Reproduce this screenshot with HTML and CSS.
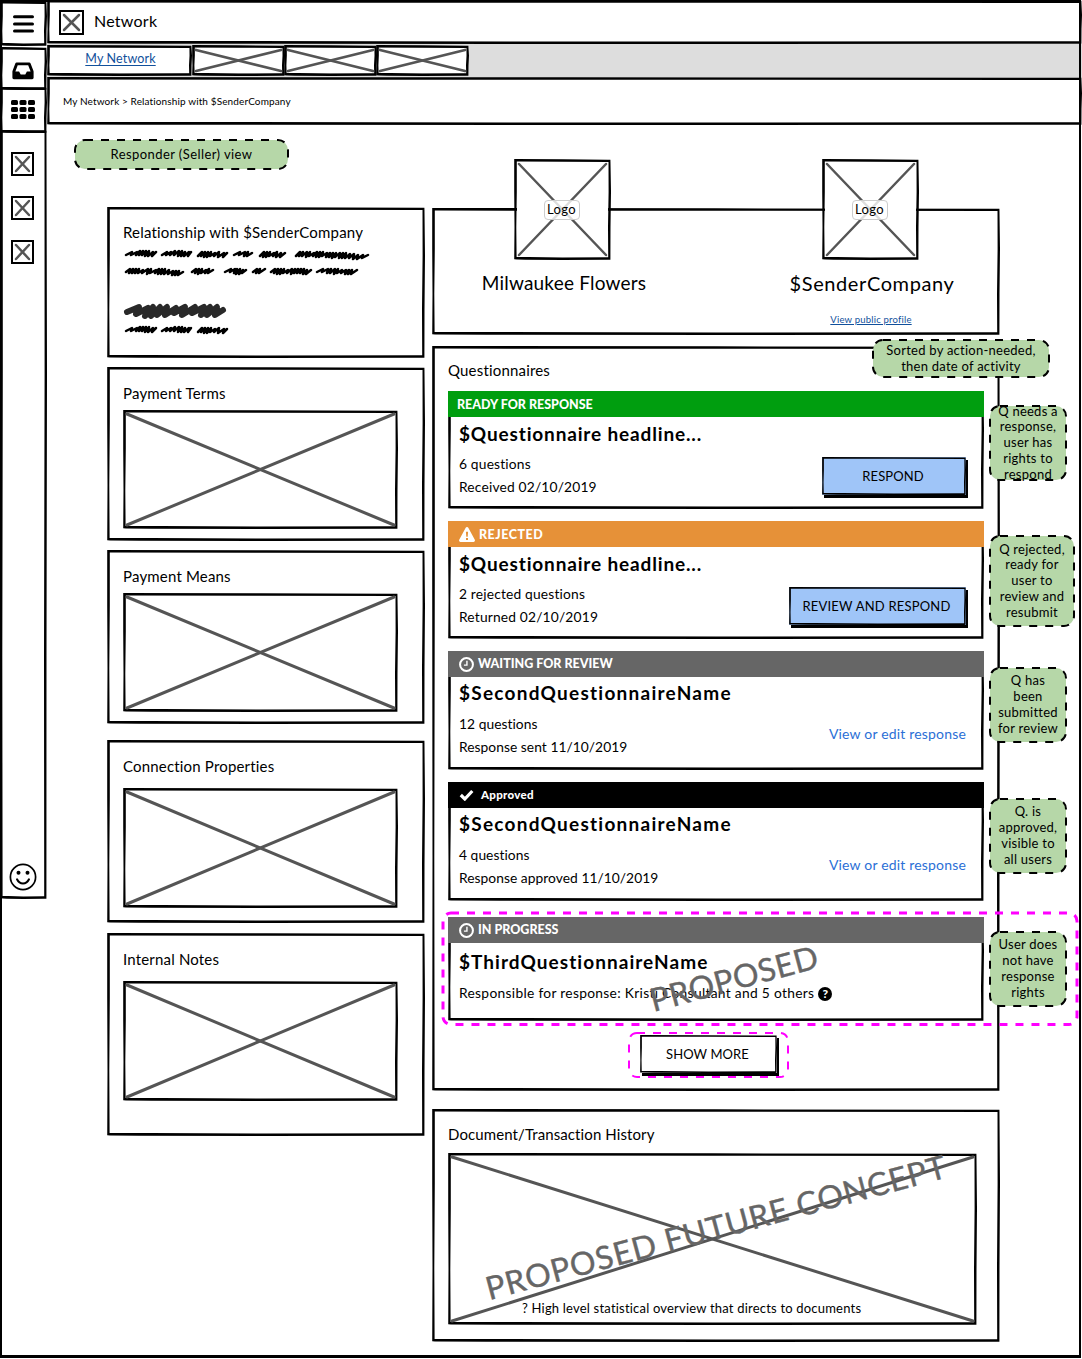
FILE: index.html
```html
<!DOCTYPE html>
<html lang="en">
<head>
<meta charset="utf-8">
<title>Network</title>
<link rel="stylesheet" href="styles.css">
</head>
<body>
<svg width="0" height="0" class="defs">
  <symbol id="cross" overflow="visible"><line x1="0" y1="0" x2="100%" y2="100%"/><line x1="100%" y1="0" x2="0" y2="100%"/></symbol>
  <symbol id="clock" viewBox="0 0 14 14"><circle cx="7" cy="7" r="6" fill="none" stroke="#fff" stroke-width="1.9"/><path d="M7.4 3.4V7.6H4.6" fill="none" stroke="#fff" stroke-width="1.3"/></symbol>
</svg>
<div class="page">
  <nav class="sidebar">
    <div class="cell sketch cell-menu"><svg width="21" height="18"><path d="M1.5 1.8h18M1.5 9h18M1.5 16h18" stroke="#000" stroke-width="3" stroke-linecap="round"/></svg></div>
    <div class="cell sketch cell-inbox"><svg width="22" height="18"><path fill-rule="evenodd" d="M4.6.4h12.6q1 0 1.4 1l2.8 7.4q.2.5.2 1v6q0 1.4-1.4 1.4H1.8q-1.4 0-1.4-1.4v-6q0-.5.2-1L3.300 1.400Q3.700.4 4.600.4zM5.700 3.200L3.400 9.500h3.700l1.600 3h4.600l1.600-3h3.700L16.200 3.200z"/></svg></div>
    <div class="cell sketch cell-apps"><svg width="24" height="19"><g><rect width="7" height="5" rx="1.500"/><rect x="8.500" width="7" height="5" rx="1.500"/><rect x="17" width="7" height="5" rx="1.500"/><rect y="7" width="7" height="5" rx="1.500"/><rect x="8.500" y="7" width="7" height="5" rx="1.500"/><rect x="17" y="7" width="7" height="5" rx="1.500"/><rect y="14" width="7" height="5" rx="1.500"/><rect x="8.500" y="14" width="7" height="5" rx="1.500"/><rect x="17" y="14" width="7" height="5" rx="1.500"/></g></svg></div>
    <div class="cell sketch cell-links">
      <span class="mini"><svg><use href="#cross"/></svg></span>
      <span class="mini"><svg><use href="#cross"/></svg></span>
      <span class="mini"><svg><use href="#cross"/></svg></span>
      <svg class="smiley" width="28" height="28"><circle cx="14" cy="14" r="12.600" fill="none" stroke="#000" stroke-width="1.700"/><circle cx="9.500" cy="9.800" r="2"/><circle cx="18.500" cy="9.800" r="2"/><path d="M8 16.300q2 4.200 6 4.200t6-4.200" fill="none" stroke="#000" stroke-width="2" stroke-linecap="round"/></svg>
    </div>
  </nav>

  <div class="main">
    <header class="topbar sketch"><span class="mini mini-lg"><svg><use href="#cross"/></svg></span><h1>Network</h1></header>
    <div class="tabs">
      <div class="tab tab-active sketch"><a>My Network</a></div>
      <div class="tab sketch"><svg><use href="#cross"/></svg></div>
      <div class="tab sketch"><svg><use href="#cross"/></svg></div>
      <div class="tab sketch"><svg><use href="#cross"/></svg></div>
    </div>
    <div class="crumbs sketch">My Network &gt; Relationship with $SenderCompany</div>

    <div class="content">
      <div class="left">
        <section class="card sketch about">
          <h2>Relationship with $SenderCompany</h2>
          <svg class="scribble" width="260" height="92" fill="none" stroke="#000" stroke-width="2.500" stroke-linecap="round" stroke-linejoin="round">
            <path d="M3 11l6-3-1 3 6-3-1 3 4-4-1 4 4-4-1 4 4-4-1 5 4-5-1 5 5-4-1 4 4-4M39 11l5-3-1 3 5-3-1 3 5-4-1 4 5-4-1 5 4-5-1 5 4-4-1 4 5-4-1 4 3-4M75 12l4-4-1 4 4-4-1 5 4-5-1 5 4-5-1 4 5-3-1 3 5-4-1 5 6-4-1 4 4-4M111 11l6-3-1 3 6-3-1 4 4-4-1 4 5-3M137 12l4-4-1 5 4-5-1 5 4-5-1 4 5-3-1 3 4-4-1 5 5-4-1 4 5-4M173 12l4-4-1 4 4-4-1 4 5-4-1 5 4-5-1 4 5-3-1 3 4-4-1 5 4-5-1 5 4-5-1 4 5-3-1 4 4-4-1 4 4-4-1 5 4-5-1 4 5-4-1 5 4-5-1 5 4-5-1 5 5-4-1 4 5-4-1 5 5-4-1 4 6-4-1 3 6-3"/>
            <path d="M3 28l4-3-1 4 4-4-1 4 4-4-1 4 4-4-1 4 5-3-1 3 6-4-1 5 4-5-1 4 6-3-1 3 4-4-1 5 4-5-1 5 4-5-1 5 5-4-1 4 5-3-1 4 4-4-1 4 4-4-1 4 5-3M69 28l4-3-1 4 4-4-1 5 4-5-1 4 5-3-1 3 4-4-1 4 5-3M102 28l6-3-1 3 5-3-1 4 3-4-1 5 4-5-1 5 4-4-1 3 4-3M130 28l4-3-1 4 4-4-1 4 6-4M148 28l4-3-1 4 4-4-1 5 4-5-1 5 4-5-1 4 5-3-1 3 5-4-1 5 4-5-1 4 4-4-1 4 4-4-1 4 4-4-1 5 4-4-1 4 5-4M194 28l6-3-1 3 6-3-1 4 4-4-1 4 5-4-1 5 4-5-1 4 5-3-1 3 5-3-1 4 4-4-1 4 4-4-1 4 6-4"/>
            <path stroke="#292929" stroke-width="6" d="M4 68l12-5-3 7 12-6-3 8 8-9-2 9 9-9-3 8 10-8-2 8 11-7-2 5 11-6-3 8 13-8-3 6 12-6-3 8 9-8-3 8 10-8-2 8 8-5"/>
            <path d="M3 87l6-3-1 3 6-3-1 3 4-4-1 4 4-4-1 4 4-4-1 5 4-5-1 5 5-4-1 4 4-4M39 87l5-3-1 3 5-3-1 3 5-4-1 4 5-4-1 5 4-5-1 5 4-4-1 4 5-4-1 4 3-4M75 88l4-4-1 4 4-4-1 5 4-5-1 5 4-5-1 4 5-3-1 3 5-4-1 5 6-4-1 4 4-4"/>
          </svg>
        </section>
        <section class="card sketch terms"><h2>Payment Terms</h2><div class="ph sketch"><svg><use href="#cross"/></svg></div></section>
        <section class="card sketch means"><h2>Payment Means</h2><div class="ph sketch"><svg><use href="#cross"/></svg></div></section>
        <section class="card sketch props"><h2>Connection Properties</h2><div class="ph sketch"><svg><use href="#cross"/></svg></div></section>
        <section class="card sketch notes"><h2>Internal Notes</h2><div class="ph sketch"><svg><use href="#cross"/></svg></div></section>
      </div>

      <div class="right">
        <section class="card sketch parties">
          <div class="party">
            <div class="logo sketch"><svg><use href="#cross"/></svg><span>Logo</span></div>
            <strong class="responder">Milwaukee Flowers</strong>
          </div>
          <div class="party">
            <div class="logo sketch"><svg><use href="#cross"/></svg><span>Logo</span></div>
            <strong>$SenderCompany</strong>
            <a>View public profile</a>
          </div>
        </section>

        <section class="card sketch questionnaires">
          <h2>Questionnaires</h2>
          <article class="item sketch i1">
            <div class="banner green">READY FOR RESPONSE</div>
            <div class="body">
              <div class="info"><h3>$Questionnaire headline...</h3><p>6 questions</p><p>Received 02/10/2019</p></div>
              <button class="btn sketch">RESPOND</button>
            </div>
          </article>
          <article class="item sketch i2">
            <div class="banner orange"><svg width="16" height="15"><path fill="#fff" fill-rule="evenodd" d="M8 0q.9 0 1.300.8l6.500 12q.3.700 0 1.300-.4.900-1.300.9H1.500q-.9 0-1.300-.9-.3-.6 0-1.300l6.500-12Q7.100 0 8 0zM6.900 4.800l.4 5h1.400l.4-5zM7 11v2h2v-2z"/></svg><span>REJECTED</span></div>
            <div class="body">
              <div class="info"><h3>$Questionnaire headline...</h3><p>2 rejected questions</p><p>Returned 02/10/2019</p></div>
              <button class="btn sketch btn-wide">REVIEW AND RESPOND</button>
            </div>
          </article>
          <article class="item sketch i3">
            <div class="banner gray"><svg width="15" height="15"><use href="#clock"/></svg><span>WAITING FOR REVIEW</span></div>
            <div class="body">
              <div class="info"><h3>$SecondQuestionnaireName</h3><p>12 questions</p><p>Response sent 11/10/2019</p></div>
              <a class="edit">View or edit response</a>
            </div>
          </article>
          <article class="item sketch i4">
            <div class="banner black"><svg width="15" height="12"><path d="M1.800 6l4 4 7.500-8" fill="none" stroke="#fff" stroke-width="3.200"/></svg><span>Approved</span></div>
            <div class="body">
              <div class="info"><h3>$SecondQuestionnaireName</h3><p>4 questions</p><p>Response approved 11/10/2019</p></div>
              <a class="edit">View or edit response</a>
            </div>
          </article>
          <article class="item sketch i5">
            <div class="banner gray"><svg width="15" height="15"><use href="#clock"/></svg><span>IN PROGRESS</span></div>
            <div class="body">
              <div class="info"><h3>$ThirdQuestionnaireName</h3><p>Responsible for response: Kristi Consultant and 5 others <span class="help">?</span></p></div>
            </div>
          </article>
          <button class="btn sketch more">SHOW MORE</button>
        </section>

        <section class="card sketch history">
          <h2>Document/Transaction History</h2>
          <div class="ph sketch"><svg><use href="#cross"/></svg><p>? High level statistical overview that directs to documents</p></div>
        </section>
      </div>
    </div>
  </div>

  <div class="note n0"><svg><rect rx="10"/></svg><span>Responder (Seller) view</span></div>
  <div class="note n1"><svg><rect rx="10"/></svg><span>Sorted by action-needed,<br>then date of activity</span></div>
  <div class="note n2"><svg><rect rx="10"/></svg><span>Q needs a<br>response,<br>user has<br>rights to<br>respond</span></div>
  <div class="note n3"><svg><rect rx="10"/></svg><span>Q rejected,<br>ready for<br>user to<br>review and<br>resubmit</span></div>
  <div class="note n4"><svg><rect rx="10"/></svg><span>Q has<br>been<br>submitted<br>for review</span></div>
  <div class="note n5"><svg><rect rx="10"/></svg><span>Q. is<br>approved,<br>visible to<br>all users</span></div>
  <svg class="outline o1"><rect rx="8"/></svg>
  <svg class="outline o2"><rect rx="8"/></svg>
  <div class="note n6"><svg><rect rx="10"/></svg><span>User does<br>not have<br>response<br>rights</span></div>
  <div class="stamp s1">PROPOSED</div>
  <div class="stamp s2">PROPOSED FUTURE CONCEPT</div>
</div>
</body>
</html>
```
FILE: styles.css
```css
* { box-sizing: border-box; }
body { margin: 0; background: #fff; color: #000; font: 14px/20px Lato, "Open Sans", sans-serif; }
h1, h2, h3, p { margin: 0; font-weight: 400; }
.defs { position: absolute; }

/* hand-drawn frame: edges vary slightly in thickness as they stretch */
.sketch {
  border: 3px solid #000;
  border-image: url("data:image/svg+xml,%3Csvg xmlns='http://www.w3.org/2000/svg' width='60' height='60'%3E%3Cpath fill-rule='evenodd' d='M.2 0L30 .3 59.400 .8 60 20 59.500 40 59.400 59.800 30 60 8 59.800 .2 59.200 .5 40 .2 20zM2.800 2.600L30 2.700 57.500 3 57.600 20 57 40 57.200 57.300 30 57.600 10 57 2.600 57.100 2.300 40 2.800 20z'/%3E%3C/svg%3E") 3 stretch;
  background: #fff;
  background-clip: padding-box;
}
.page { position: relative; display: flex; width: 1082px; height: 1359px; overflow: hidden; }
.page::after { content: ""; position: absolute; inset: 0 1px 1px 0; border: solid #000; border-width: 2px 2px 3px 2px; pointer-events: none; }

.sidebar { flex: none; width: 47px; height: 899px; padding-top: 1px; display: flex; flex-direction: column; }
.cell { display: flex; justify-content: center; align-items: center; padding-right: 2px; }
.cell-menu { height: 45px; padding-right: 1px; }
.cell-inbox { height: 43px; margin-top: 1px; padding-top: 4px; }
.cell-apps { height: 46px; margin-top: -3px; padding-bottom: 2px; }
.cell-links { flex: 1; margin-top: -3px; flex-direction: column; justify-content: flex-start; padding: 19px 2px 0 0; gap: 20px; }
.mini { flex: none; width: 23px; height: 24px; padding: 3px; display: flex; border: 2px solid #000; background: #fff; stroke: #555; stroke-width: 2.500; stroke-linecap: round; }
.mini svg { width: 100%; height: 100%; overflow: visible; }
.mini-lg { width: 25px; height: 25px; }
.smiley { margin: auto 0 5px 1px; }

.main { flex: 1; min-width: 0; display: flex; flex-direction: column; }
.topbar { height: 44px; display: flex; align-items: center; padding: 0 0 0 9px; gap: 10px; }
h1 { font-size: 16px; letter-spacing: .25px; margin-top: -2px; }
.tabs { display: flex; height: 34px; background: #ddd; padding-top: 1px; }
.tab { width: 93px; height: 31px; margin-right: -1px; padding: 2px 1px; stroke: #555; stroke-width: 2.800; stroke-linecap: round; }
.tab svg { display: block; width: 100%; height: 100%; overflow: visible; }
.tab-active { width: 145px; margin-right: 0; padding: 0 0 3px 2px; display: flex; justify-content: center; align-items: center; }
.tab a, .party a { color: #11509b; text-decoration: underline; text-underline-offset: 2px; stroke: none; }
.tab a { font-size: 12.500px; letter-spacing: .15px; }
.crumbs { height: 48px; margin-top: -1px; padding: 11px 13px; font-size: 10px; line-height: 20px; letter-spacing: .12px; }

.content { display: flex; gap: 7px; padding-left: 60px; }
.left { width: 318px; padding-top: 82px; display: flex; flex-direction: column; }
.right { width: 568px; padding-top: 83px; display: flex; flex-direction: column; }
.card { flex: none; padding: 13px 13px 0; }
h2 { font-size: 15px; line-height: 20px; letter-spacing: .18px; }
.about { height: 151px; padding-top: 12px; }
.scribble { display: block; margin-top: 2px; }
.terms { height: 174px; margin-top: 9px; }
.means { height: 174px; margin-top: 9px; }
.props { height: 183px; margin-top: 16px; }
.notes { height: 203px; margin-top: 10px; }
.ph { position: relative; width: 275px; height: 119px; margin-top: 7px; padding: 1px; stroke: #555; stroke-width: 3; stroke-linecap: round; }
.ph svg { display: block; width: 100%; height: 100%; overflow: visible; }
.props .ph, .notes .ph { height: 120px; margin-top: 12px; }

.parties { height: 127px; display: flex; gap: 52px; padding: 0; }
.party { flex: none; width: 254px; display: flex; flex-direction: column; align-items: center; }
.party + .party { margin-left: 2px; }
.logo { position: relative; width: 97px; height: 101px; margin-top: -52px; padding: 2px; stroke: #555; stroke-width: 2.500; stroke-linecap: round; flex: none; }
.logo svg { display: block; width: 100%; height: 100%; overflow: visible; }
.logo span { position: absolute; left: 27px; top: 38px; width: 36px; height: 20px; border: 1px solid #ccc; border-radius: 4px; background: rgba(255,255,255,.8); text-align: center; font-size: 13px; line-height: 16px; letter-spacing: .3px; stroke: none; }
.party strong { font-weight: 400; font-size: 20px; line-height: 26px; margin: 10px 0 0 4px; letter-spacing: .6px; }
.party .responder { font-size: 19px; letter-spacing: .2px; }
.party a { font-size: 9.500px; line-height: 14px; margin: 17px 0 0 2px; letter-spacing: .2px; text-underline-offset: 1px; }

.questionnaires { height: 745px; margin-top: 11px; padding-top: 11px; display: flex; flex-direction: column; }
.item { width: 536px; height: 118px; flex: none; }
.i1 { margin-top: 11px; }
.i2 { margin-top: 12px; }
.i3 { margin-top: 12px; height: 119px; }
.i4 { margin-top: 12px; height: 119px; }
.i5 { margin-top: 16px; height: 104px; }
.banner { position: relative; display: flex; align-items: center; gap: 4px; height: 26px; margin: -3px -3px 0; padding-left: 11px; color: #fff; font-weight: 900; font-size: 12.500px; }
.green { background: #009e0f; padding: 1px 0 0 9px; }
.orange { background: #e69138; letter-spacing: .5px; padding-top: 1px; }
.gray { background: #666; }
.black { background: #000; gap: 7px; }
.banner.black { font-size: 11.500px; letter-spacing: .3px; }
.body { display: flex; justify-content: space-between; align-items: flex-start; padding: 5px 12px 0 8px; }
h3 { font-size: 19px; font-weight: 700; line-height: 24px; margin-bottom: 6px; letter-spacing: .85px; }
.info p { font-size: 13.800px; line-height: 23px; letter-spacing: .17px; }
.i3 h3, .i4 h3 { margin-top: -1px; margin-bottom: 7px; letter-spacing: 1.250px; }
.i5 h3 { margin: 2px 0 7px; letter-spacing: 1.050px; }
.i3 .info p, .i4 .info p { letter-spacing: .04px; }
.i5 .info p { letter-spacing: .3px; }
.btn { width: 144px; height: 38px; margin-top: 35px; padding: 0 2px 0 0; font: 13px/32px Lato, sans-serif; letter-spacing: .1px; background: #9fc5f8; background-clip: border-box; box-shadow: 2px 3px 0 #000; border-width: 2px; margin-right: 3px; }
.btn-wide { width: 177px; letter-spacing: .2px; }
.edit { color: #2b6fd6; font-size: 14px; line-height: 20px; margin: 42px 3px 0 0; letter-spacing: .18px; }
.help { display: inline-block; width: 14px; height: 14px; border-radius: 50%; background: #000; color: #fff; font-size: 12px; line-height: 14px; font-weight: 900; text-align: center; letter-spacing: 0; }
.more { width: 137px; margin: 14px 0 0 192px; background: #fff; }

.history { height: 233px; margin-top: 18px; padding-top: 12px; }
.history h2 { letter-spacing: .1px; }
.history .ph { width: 529px; height: 172px; margin-top: 9px; }
.history .ph p { position: absolute; left: 71px; bottom: 4px; font-size: 13px; letter-spacing: .2px; stroke: none; white-space: nowrap; }

/* reviewer annotations pinned over the wireframe */
.note { position: absolute; display: flex; justify-content: center; align-items: center; text-align: center; font-size: 13px; line-height: 15.800px; letter-spacing: .25px; }
.note svg { position: absolute; left: 1px; top: 1px; width: calc(100% - 2px); height: calc(100% - 2px); overflow: visible; }
.note rect { width: 100%; height: 100%; fill: #b6d7a8; stroke: #000; stroke-width: 2; stroke-dasharray: 8 8; }
.note span { position: relative; white-space: nowrap; }
.n0 { left: 74px; top: 139px; width: 215px; height: 31px; letter-spacing: .42px; }
.n1 { left: 872px; top: 339px; width: 178px; height: 39px; }
.n2 { left: 989px; top: 405px; width: 78px; height: 76px; }
.n3 { left: 989px; top: 535px; width: 86px; height: 92px; }
.n4 { left: 989px; top: 667px; width: 78px; height: 76px; }
.n5 { left: 989px; top: 798px; width: 78px; height: 76px; }
.n6 { left: 989px; top: 931px; width: 78px; height: 76px; }
.outline { position: absolute; overflow: visible; }
.outline rect { width: 100%; height: 100%; fill: none; stroke: #f0f; stroke-width: 3; stroke-dasharray: 8 8; }
.o1 { left: 443px; top: 912.500px; width: 634px; height: 111.500px; }
.o2 { left: 629px; top: 1033px; width: 159px; height: 44px; }
.o2 rect { stroke-width: 2; }
.stamp { position: absolute; color: #666; font-size: 32px; line-height: 40px; letter-spacing: .4px; white-space: nowrap; transform: translate(-50%, -50%) rotate(-15deg); -webkit-text-stroke: .4px #666; }
.s1 { left: 734px; top: 978px; }
.s2 { left: 716px; top: 1227px; letter-spacing: .8px; }
```
